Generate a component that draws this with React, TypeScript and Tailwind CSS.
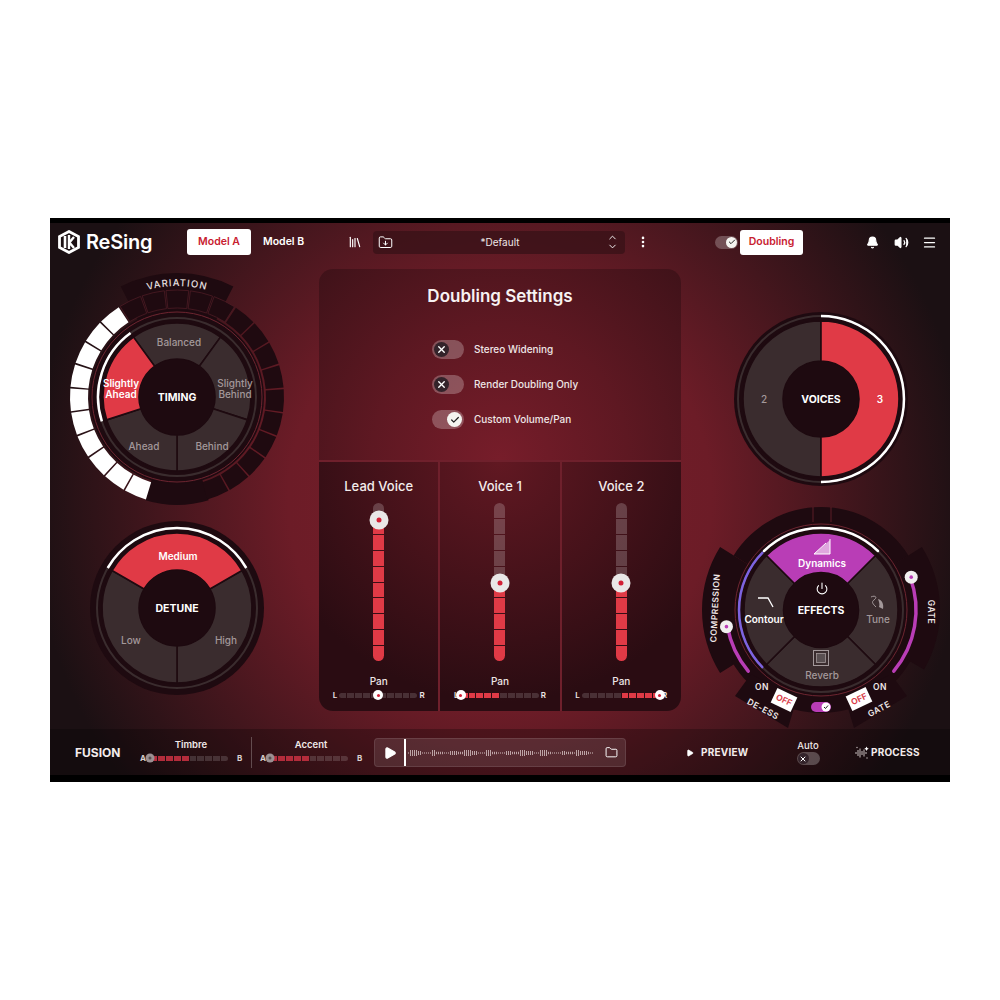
import * as React from "react";
import {
  Bell,
  Check,
  ChevronDown,
  ChevronUp,
  EllipsisVertical,
  Folder,
  FolderDown,
  Library,
  Menu,
  Play,
  Power,
  Volume2,
  X,
} from "lucide-react";

const RED = "#e03a46";
const SEG = "#3a2c2e";
const DARK = "#1e0a10";
const PURPLE = "#b93db6";

const pt = (r: number, a: number) => {
  const t = (a * Math.PI) / 180;
  return `${(r * Math.sin(t)).toFixed(2)} ${(-r * Math.cos(t)).toFixed(2)}`;
};

const arc = (r: number, a0: number, a1: number) =>
  `M${pt(r, a0)} A${r} ${r} 0 ${a1 - a0 > 180 ? 1 : 0} 1 ${pt(r, a1)}`;

const sector = (r0: number, r1: number, a0: number, a1: number) =>
  `M${pt(r0, a0)} A${r0} ${r0} 0 ${a1 - a0 > 180 ? 1 : 0} 1 ${pt(r0, a1)} L${pt(r1, a1)} A${r1} ${r1} 0 ${a1 - a0 > 180 ? 1 : 0} 0 ${pt(r1, a0)} Z`;

function Label({
  x,
  y,
  on,
  bold,
  children,
}: {
  x: number;
  y: number;
  on?: boolean;
  bold?: boolean;
  children: React.ReactNode;
}) {
  return (
    <text
      x={x}
      y={y}
      textAnchor="middle"
      dominantBaseline="central"
      className={
        bold
          ? "fill-white text-[10.5px] font-bold"
          : on
            ? "fill-white text-[10px] font-semibold"
            : "fill-[#a3989a] text-[10px] font-medium"
      }
    >
      {children}
    </text>
  );
}

function Wheel({
  segments,
  outer = 75,
  hub = 38,
  fill = RED,
}: {
  segments: { a0: number; a1: number; on?: boolean }[];
  outer?: number;
  hub?: number;
  fill?: string;
}) {
  return (
    <>
      {segments.map((s) => (
        <path
          key={s.a0}
          d={sector(hub, outer, s.a0, s.a1)}
          fill={s.on ? fill : SEG}
          stroke={DARK}
          strokeWidth={1.6}
        />
      ))}
      <circle r={hub} fill={DARK} />
    </>
  );
}

function TimingDial() {
  const blocks = Array.from({ length: 25 }, (_, i) => i * 13.1 - 157);
  return (
    <svg width={250} height={245} viewBox="-125 -124 250 245" className="shrink-0">
      <path d={sector(84, 108, 163, 197)} fill={DARK} />
      <path d={sector(86, 124, -27, 27)} fill={DARK} />
      {blocks.map((a) => {
        const white = a <= -38;
        return (
          <path
            key={a}
            d={sector(89, 107, a - 6.1, a + 6.1)}
            fill={white ? "#ffffff" : "#1f0a10"}
            stroke={Math.abs(a) < 32 ? "#4d1c25" : "none"}
            strokeWidth={0.8}
          />
        );
      })}
      <circle r={87} fill={DARK} />
      <circle r={85} fill="none" stroke="#6d2530" strokeWidth={1} />
      <circle r={79} fill="none" stroke={SEG} strokeWidth={2} />
      <path d={arc(79, -108, -36)} fill="none" stroke="#fff" strokeWidth={2.5} />
      <Wheel
        outer={74}
        segments={[
          { a0: -36, a1: 36 },
          { a0: 36, a1: 108 },
          { a0: 108, a1: 180 },
          { a0: 180, a1: 252 },
          { a0: -108, a1: -36, on: true },
        ]}
      />
      <path id="variation-curve" d={arc(111, -40, 40)} fill="none" />
      <text className="fill-[#e8e0e0] text-[9.5px] font-medium tracking-[1px]" textAnchor="middle">
        <textPath href="#variation-curve" startOffset="50%">
          VARIATION
        </textPath>
      </text>
      <Label x={2} y={-55}>Balanced</Label>
      <Label x={58} y={-14}>Slightly</Label>
      <Label x={58} y={-3}>Behind</Label>
      <Label x={35} y={49}>Behind</Label>
      <Label x={-33} y={49}>Ahead</Label>
      <Label x={-56} y={-14} on>Slightly</Label>
      <Label x={-56} y={-3} on>Ahead</Label>
      <Label x={0} y={0} bold>TIMING</Label>
    </svg>
  );
}

function DetuneDial() {
  return (
    <svg width={180} height={180} viewBox="-90 -90 180 180" className="shrink-0">
      <circle r={87} fill={DARK} />
      <circle r={80} fill="none" stroke={SEG} strokeWidth={2} />
      <path d={arc(80, -60, 60)} fill="none" stroke="#fff" strokeWidth={2.5} />
      <Wheel
        segments={[
          { a0: 60, a1: 180 },
          { a0: 180, a1: 300 },
          { a0: -60, a1: 60, on: true },
        ]}
      />
      <Label x={1} y={-52} on>Medium</Label>
      <Label x={-46} y={32}>Low</Label>
      <Label x={49} y={32}>High</Label>
      <Label x={0} y={0} bold>DETUNE</Label>
    </svg>
  );
}

function VoicesDial() {
  return (
    <svg width={180} height={180} viewBox="-90 -90 180 180" className="shrink-0">
      <circle r={87} fill={DARK} />
      <circle r={83} fill="none" stroke={SEG} strokeWidth={2} />
      <path d={arc(83, 0, 180)} fill="none" stroke="#fff" strokeWidth={2.5} />
      <Wheel
        outer={78}
        segments={[
          { a0: 180, a1: 360 },
          { a0: 0, a1: 180, on: true },
        ]}
      />
      <Label x={-57} y={0}>2</Label>
      <Label x={59} y={0} on>3</Label>
      <Label x={0} y={0} bold>VOICES</Label>
    </svg>
  );
}

function Knob({ a, r = 96 }: { a: number; r?: number }) {
  const t = (a * Math.PI) / 180;
  const x = r * Math.sin(t);
  const y = -r * Math.cos(t);
  return (
    <>
      <circle cx={x} cy={y} r={6.5} fill="#f1efef" />
      <circle cx={x} cy={y} r={1.8} fill={PURPLE} />
    </>
  );
}

function OffTag({ x, y, rot }: { x: number; y: number; rot: number }) {
  return (
    <g transform={`translate(${x} ${y}) rotate(${rot})`}>
      <rect x={-11} y={-8} width={22} height={16} fill="#fff" />
      <text
        textAnchor="middle"
        dominantBaseline="central"
        className="fill-[#d8404c] text-[8.5px] font-bold"
      >
        OFF
      </text>
    </g>
  );
}

function TiltText({
  x,
  y,
  rot,
  children,
}: {
  x: number;
  y: number;
  rot: number;
  children: React.ReactNode;
}) {
  return (
    <text
      transform={`translate(${x} ${y}) rotate(${rot})`}
      textAnchor="middle"
      dominantBaseline="central"
      className="fill-[#eee6e6] text-[8.5px] font-semibold tracking-[0.5px]"
    >
      {children}
    </text>
  );
}

function EffectsDial() {
  return (
    <svg width={244} height={223} viewBox="-122 -104 244 223" className="shrink-0">
      <path d={sector(84, 103, -58, 58)} fill={DARK} />
      <path d={sector(84, 119, -122, -58)} fill={DARK} />
      <path d={sector(84, 119, 58, 120)} fill={DARK} />
      <path d={sector(84, 103, 120, 240)} fill={DARK} />
      <polygon points="-86,86 -70,64 -24,88 -33,118" fill={DARK} />
      <polygon points="86,86 70,64 24,88 33,118" fill={DARK} />
      <line x1={-8} y1={-103} x2={-8} y2={-88} stroke="#5a1c26" strokeWidth={1} />
      <line x1={10} y1={-103} x2={10} y2={-88} stroke="#5a1c26" strokeWidth={1} />

      <path d={arc(95, -130, -100)} fill="none" stroke={PURPLE} strokeWidth={3.5} strokeLinecap="round" />
      <path d={arc(95, 70, 130)} fill="none" stroke={PURPLE} strokeWidth={3.5} strokeLinecap="round" />
      <Knob a={-100} />
      <Knob a={70} />

      <circle r={85} fill={DARK} />
      <circle r={86} fill="none" stroke="#6d2530" strokeWidth={1} />
      <circle r={82} fill="none" stroke={SEG} strokeWidth={2} />
      <path d={arc(82, -44, 44)} fill="none" stroke="#fff" strokeWidth={2.5} strokeLinecap="round" />
      <path d={arc(82, -135, -45)} fill="none" stroke="#7d63e0" strokeWidth={2.5} />
      <Wheel
        outer={77}
        hub={37.5}
        fill={PURPLE}
        segments={[
          { a0: 45, a1: 135 },
          { a0: 135, a1: 225 },
          { a0: 225, a1: 315 },
          { a0: -45, a1: 45, on: true },
        ]}
      />

      {/* segment glyphs */}
      <path d="M-7 -56 L9 -70 V-56 Z" fill="#fff" fillOpacity={0.55} />
      <path d="M-7 -56 L5 -67 M9 -71 V-56 M-7 -56 H9" stroke="#fff" strokeWidth={1} fill="none" />
      <path d="M-63 -12 H-53 L-48 -3" stroke="#fff" strokeWidth={1.3} fill="none" />
      <path
        d="M50 -13 C54 -15 57 -13 53 -10 C50 -8 52 -6 55 -3"
        stroke="#a3989a"
        strokeWidth={1}
        fill="none"
      />
      <path d="M57 -11 C61 -10 63 -6 62 -1 L58 -3 C59 -6 58 -8 57 -11 Z" fill="#a3989a" />
      <rect x={-7.5} y={40.5} width={15} height={15} fill="none" stroke="#a3989a" strokeWidth={1} />
      <rect x={-4.5} y={43.5} width={9} height={9} fill="#5a5052" stroke="#a3989a" strokeWidth={0.8} />
      <Power x={-5.5} y={-28} width={13} height={13} color="#fff" strokeWidth={2} />

      <Label x={1} y={-47} on>Dynamics</Label>
      <Label x={-57} y={9} on>Contour</Label>
      <Label x={57} y={9}>Tune</Label>
      <Label x={1} y={65}>Reverb</Label>
      <Label x={0} y={0} bold>EFFECTS</Label>

      <TiltText x={-106} y={-2} rot={-87}>COMPRESSION</TiltText>
      <TiltText x={110} y={2} rot={90}>GATE</TiltText>
      <TiltText x={-59} y={77} rot={0}>ON</TiltText>
      <TiltText x={59} y={77} rot={0}>ON</TiltText>
      <OffTag x={-37} y={90} rot={25} />
      <OffTag x={38} y={89} rot={-25} />
      <TiltText x={-58} y={99} rot={28}>DE-ESS</TiltText>
      <TiltText x={58} y={99} rot={-28}>GATE</TiltText>

      <rect x={-10} y={92} width={20} height={10} rx={5} fill={PURPLE} />
      <circle cx={5} cy={97} r={4.5} fill="#fff" />
      <path d="M3 97 L4.5 98.5 L7 95.5" stroke="#222" strokeWidth={1} fill="none" />
    </svg>
  );
}

function Toggle({ on, small }: { on?: boolean; small?: boolean }) {
  return (
    <span
      className={`flex shrink-0 items-center rounded-full bg-white/25 ${on ? "justify-end" : "justify-start"} ${
        small ? "h-[13px] w-[23px] p-px" : "h-[19px] w-[32px] p-[2px]"
      }`}
    >
      <span
        className={`flex items-center justify-center rounded-full ${on ? "bg-[#f4f4f0] text-[#222]" : "bg-[#33232a] text-white"} ${
          small ? "size-[11px]" : "size-[15px]"
        }`}
      >
        {on ? (
          <Check size={small ? 8 : 10} strokeWidth={3} />
        ) : (
          <X size={small ? 8 : 11} strokeWidth={3} />
        )}
      </span>
    </span>
  );
}

function VolumeSlider({ filledFrom, knobTop }: { filledFrom: number; knobTop: number }) {
  return (
    <div className="relative mt-[8px] h-[158px] w-[11px]">
      <div className="flex h-full flex-col gap-px overflow-hidden rounded-full">
        {Array.from({ length: 10 }, (_, i) => (
          <div key={i} className={`flex-1 ${i >= filledFrom ? "bg-[#e03a46]" : "bg-white/20"}`} />
        ))}
      </div>
      <div
        className="absolute left-1/2 flex size-[19px] -translate-x-1/2 -translate-y-1/2 items-center justify-center rounded-full bg-[#e9e7e7]"
        style={{ top: knobTop }}
      >
        <div className="size-[5px] rounded-full bg-[#d21f35]" />
      </div>
    </div>
  );
}

function PanTrack({
  from,
  to,
  knob,
  muted,
}: {
  from: number;
  to: number;
  knob: number;
  muted?: boolean;
}) {
  return (
    <div className="relative h-[5px] w-[78px]">
      <div className="flex h-full gap-px overflow-hidden rounded-full">
        {Array.from({ length: 10 }, (_, i) => (
          <div
            key={i}
            className={`flex-1 ${
              i >= from && i < to ? (muted ? "bg-[#b32c3b]" : "bg-[#e03a46]") : "bg-white/15"
            }`}
          />
        ))}
      </div>
      <div
        className={`absolute top-1/2 flex -translate-x-1/2 -translate-y-1/2 items-center justify-center rounded-full ${
          muted ? "size-[9px] bg-[#9a9092]" : "size-[10px] bg-white"
        }`}
        style={{ left: `${knob}%` }}
      >
        <div className={`size-[3px] rounded-full ${muted ? "bg-[#5a5052]" : "bg-[#d21f35]"}`} />
      </div>
    </div>
  );
}

function VoiceColumn({
  title,
  filledFrom,
  knobTop,
  from,
  to,
  knob,
  border,
}: {
  title: string;
  filledFrom: number;
  knobTop: number;
  from: number;
  to: number;
  knob: number;
  border?: boolean;
}) {
  return (
    <div className={`flex flex-1 flex-col items-center pt-[15px] ${border ? "border-l-2 border-[#6f202c]" : ""}`}>
      <div className="text-[13px] leading-[18px] font-medium text-[#f3ecec]">{title}</div>
      <VolumeSlider filledFrom={filledFrom} knobTop={knobTop} />
      <div className="mt-[14px] text-[10px] leading-[12px] font-medium text-[#eee6e6]">Pan</div>
      <div className="mt-[3px] flex h-[10px] w-[92px] items-center justify-between text-[8px] font-semibold text-[#eee6e6]">
        <span>L</span>
        <PanTrack from={from} to={to} knob={knob} />
        <span>R</span>
      </div>
    </div>
  );
}

function Fusion({ title }: { title: string }) {
  return (
    <div className="mb-[3px] flex w-[104px] flex-col items-center">
      <div className="text-[9.5px] leading-[12px] font-semibold text-[#f0e8e8]">{title}</div>
      <div className="mt-[2px] flex h-[10px] w-full items-center text-[8px] font-bold text-[#d8d0d0]">
        <span className="ml-px w-[10px]">A</span>
        <PanTrack from={0} to={5} knob={0} muted />
        <span className="ml-[9px]">B</span>
      </div>
    </div>
  );
}

const WAVE = Array.from({ length: 93 }, (_, i) => {
  const n = (i * 37 + (i % 7) * 13) % 17;
  return n > 12 ? 6 : n > 8 ? 4 : n > 4 ? 2.5 : 1.2;
});

function Waveform() {
  return (
    <svg width={186} height={14} viewBox="0 0 186 14" className="shrink-0">
      {WAVE.map((h, i) => (
        <rect key={i} x={i * 2} y={7 - h / 2} width={1} height={h} fill="#e8d8d8" fillOpacity={0.7} />
      ))}
    </svg>
  );
}

function ProcessIcon() {
  return (
    <svg width={14} height={14} viewBox="0 0 14 14" className="ml-[35px] shrink-0">
      <path
        d="M1 6 V8 M3 4 V10 M5 2.5 V11.5 M7 5 V9 M9 3.5 V10.5 M11 6 V8"
        stroke="#c9bfbf"
        strokeWidth={1}
      />
      <path d="M11.5 0.5 L12.3 2 L13.8 2.8 L12.3 3.5 L11.5 5 L10.8 3.5 L9.3 2.8 L10.8 2 Z" fill="#fff" />
      <circle cx={2} cy={1.5} r={0.7} fill="#c9bfbf" />
      <circle cx={12} cy={12} r={0.7} fill="#c9bfbf" />
    </svg>
  );
}

function Logo() {
  return (
    <svg width={22} height={24} viewBox="0 0 22 24" className="shrink-0">
      <path d="M11 1.5 L20.5 6.5 V17.5 L11 22.5 L1.5 17.5 V6.5 Z" fill="none" stroke="#fff" strokeWidth={2.8} />
      <path d="M7 6 V18" stroke="#fff" strokeWidth={2.6} />
      <path d="M11 5 V19 M11 13 L16 7 M11 12 L16 18" stroke="#fff" strokeWidth={2.4} fill="none" />
    </svg>
  );
}

function Header() {
  return (
    <div className="flex h-[46px] items-center pb-[8px]">
      <div className="ml-[8px]">
        <Logo />
      </div>
      <div className="ml-[6px] w-[101px] text-[20px] leading-none font-semibold tracking-[-0.2px] text-white">ReSing</div>
      <button className="flex h-[26px] w-[64px] items-center justify-center rounded-[3px] bg-white text-[10.5px] font-semibold text-[#c8202f]">
        Model A
      </button>
      <div className="ml-[12px] w-[40px] text-[10.5px] font-semibold whitespace-nowrap text-white">Model B</div>
      <Library className="ml-[45px] text-white" size={14} />
      <div className="ml-[11px] flex h-[23px] w-[252px] items-center rounded-[4px] bg-[#3a1118]/80 pr-[7px] pl-[5px] text-white">
        <FolderDown size={15} strokeWidth={1.6} />
        <div className="flex-1 text-center text-[10px] text-[#efe6e6]">*Default</div>
        <div className="flex flex-col">
          <ChevronUp size={11} strokeWidth={2} className="-mb-[2px]" />
          <ChevronDown size={11} strokeWidth={2} />
        </div>
      </div>
      <EllipsisVertical className="ml-[11px] text-white" size={14} strokeWidth={2.5} />
      <div className="ml-[65px]">
        <Toggle on small />
      </div>
      <button className="ml-[2px] flex h-[25px] w-[63px] items-center justify-center rounded-[3px] bg-white text-[10.5px] font-semibold text-[#c8202f]">
        Doubling
      </button>
      <Bell className="ml-[63px] fill-white text-white" size={13} />
      <Volume2 className="ml-[15px] fill-white text-white" size={15} />
      <Menu className="ml-[13px] text-white" size={15} strokeWidth={2} />
    </div>
  );
}

function SettingRow({ label, on }: { label: string; on?: boolean }) {
  return (
    <div className="flex h-[19px] items-center gap-[10px]">
      <Toggle on={on} />
      <span className="text-[10px] font-medium whitespace-nowrap text-[#eee6e6]">{label}</span>
    </div>
  );
}

function DoublingPanel() {
  return (
    <div className="flex h-[442px] w-[362px] shrink-0 flex-col overflow-hidden rounded-[14px]">
      <div className="flex h-[191px] flex-col items-center bg-[radial-gradient(ellipse_at_50%_100%,#771d2a_0%,#5e1822_50%,#3f1219_100%)]">
        <h2 className="mt-[17px] text-[17px] leading-[20px] font-semibold text-[#f7f2f2]">Doubling Settings</h2>
        <div className="mt-[34px] flex w-[136px] flex-col gap-[16px] self-center">
          <SettingRow label="Stereo Widening" />
          <SettingRow label="Render Doubling Only" />
          <SettingRow label="Custom Volume/Pan" on />
        </div>
      </div>
      <div className="flex flex-1 border-t-2 border-[#6f202c] bg-[radial-gradient(ellipse_240px_240px_at_50%_0%,#611822_0%,#46121a_50%,#2a0c12_100%)]">
        <VoiceColumn title="Lead Voice" filledFrom={1} knobTop={17} from={0} to={0} knob={50} />
        <VoiceColumn title="Voice 1" filledFrom={5} knobTop={80} from={0} to={5} knob={0} border />
        <VoiceColumn title="Voice 2" filledFrom={5} knobTop={80} from={5} to={10} knob={100} border />
      </div>
    </div>
  );
}

function Footer() {
  return (
    <div className="flex h-[46px] items-center bg-black/25 pt-px pl-[25px]">
      <div className="w-[64px] text-[12px] font-bold text-[#f3ecec]">FUSION</div>
      <Fusion title="Timbre" />
      <div className="mr-[7px] ml-[8px] h-[31px] w-px bg-white/25" />
      <Fusion title="Accent" />
      <div className="ml-[11px] flex h-[29px] w-[252px] items-center rounded-[4px] border border-white/10 bg-white/10 text-white">
        <Play className="ml-[8px] fill-white" size={14} />
        <div className="ml-[7px] h-full w-[2px] bg-white" />
        <div className="ml-[2px]">
          <Waveform />
        </div>
        <Folder className="ml-[11px]" size={13} strokeWidth={1.8} />
      </div>
      <Play className="ml-[60px] fill-white text-white" size={8} />
      <div className="ml-[7px] w-[47px] text-[10px] font-bold tracking-[0.2px] whitespace-nowrap text-[#f3ecec]">PREVIEW</div>
      <div className="ml-[48px] flex w-[24px] flex-col items-center gap-px">
        <div className="text-[9.5px] leading-[11px] font-medium text-[#eee6e6]">Auto</div>
        <Toggle small />
      </div>
      <ProcessIcon />
      <div className="ml-[2px] text-[10px] font-bold tracking-[0.2px] whitespace-nowrap text-[#f3ecec]">PROCESS</div>
    </div>
  );
}

export default function App() {
  return (
    <div className="flex min-h-[1000px] items-center justify-center bg-white font-['Inter',sans-serif]">
      <div className="w-[900px] border-t-[5px] border-b-[7px] border-black bg-[radial-gradient(circle_470px_at_50%_50%,#7b1f2b_0%,#6c1c27_45%,#1b1013_100%)]">
        <Header />
        <div className="flex h-[460px]">
          <div className="flex w-[269px] flex-col items-center pt-[4px] pr-[15px]">
            <TimingDial />
            <DetuneDial />
          </div>
          <DoublingPanel />
          <div className="flex w-[269px] flex-col items-center pt-[40px] pl-[11px]">
            <VoicesDial />
            <div className="mt-[17px]">
              <EffectsDial />
            </div>
          </div>
        </div>
        <Footer />
      </div>
    </div>
  );
}
